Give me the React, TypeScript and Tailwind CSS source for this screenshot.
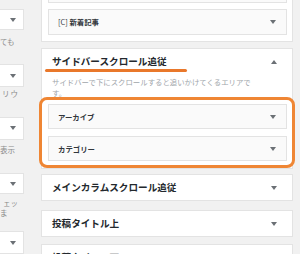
import React from "react";

const Arrow = ({ up }: { up?: boolean }) => (
  <svg width="6" height="4" viewBox="0 0 6 4" className="shrink-0">
    <path d={up ? "M0 4 L3 0 L6 4Z" : "M0 0 L6 0 L3 4Z"} fill="#6b7075" />
  </svg>
);

const LeftBox = ({ cls }: { cls: string }) => (
  <div className={`w-[24px] bg-white border-y border-r border-[#e3e3e3] flex items-center justify-end pr-[7px] ${cls}`}>
    <Arrow />
  </div>
);

const Widget = ({ title, cls }: { title: React.ReactNode; cls: string }) => (
  <div className={`shrink-0 bg-[#fafafa] border border-[#e3e3e3] flex items-center justify-between pl-[9px] pr-[10px] ${cls}`}>
    <span className="text-[7.4px] font-bold text-[#32373c] leading-none">{title}</span>
    <Arrow />
  </div>
);

const Sidebar = ({ title, cls }: { title: string; cls: string }) => (
  <div className={`shrink-0 bg-white border border-[#e3e3e3] flex items-center justify-between pl-[10px] pr-[15px] ${cls}`}>
    <span className="text-[9.6px] font-bold text-[#23282d] leading-none">{title}</span>
    <Arrow />
  </div>
);

export default function App() {
  return (
    <div className="relative w-[300px] h-[254px] overflow-hidden bg-[#f1f1f1] flex font-['Noto_Sans_CJK_JP','Noto_Sans',sans-serif]">
      {/* left column */}
      <div className="w-[25px] shrink-0 flex flex-col text-[7.5px] leading-[10px] text-[#8a8a8a]">
        <LeftBox cls="mt-[9px] h-[24px]" />
        <p className="mt-[7px] whitespace-nowrap">ても</p>
        <LeftBox cls="mt-[17px] h-[26px]" />
        <p className="mt-[2px] pl-[2px] whitespace-nowrap tracking-[1px]">リウ</p>
        <LeftBox cls="mt-[18px] h-[26px]" />
        <p className="mt-[5px] whitespace-nowrap">表示</p>
        <LeftBox cls="mt-[18px] h-[24px]" />
        <p className="mt-[4px] pl-[3px] whitespace-nowrap">ェッ</p>
        <p className="whitespace-nowrap">ま</p>
        <LeftBox cls="mt-[13px] h-[26px]" />
      </div>

      {/* sidebars column */}
      <div className="ml-[16px] w-[252px] shrink-0 flex flex-col">
        <div className="h-[42px] shrink-0 bg-white border-x border-b border-[#e3e3e3] flex flex-col justify-end pl-[6px] pr-[5px] pb-[6px] gap-[6px] overflow-hidden">
          <Widget title="" cls="h-[26px]" />
          <Widget
            title={
              <>
                <span className="font-normal">[C] </span>新着記事
              </>
            }
            cls="h-[26px]"
          />
        </div>

        <div className="mt-[6px] shrink-0 bg-white border border-[#e3e3e3] flex flex-col pl-[6px] pr-[5px] pt-[6px] pb-[7px]">
          <div className="h-[14px] flex items-center justify-between pl-[4px] pr-[10px]">
            <span className="text-[9.6px] font-bold text-[#23282d] leading-none">サイドバースクロール追従</span>
            <Arrow up />
          </div>
          <p className="mt-[7px] pl-[4px] w-[212px] text-[7.4px] leading-[11px] text-[#a0a5aa]">
            サイドバーで下にスクロールすると追いかけてくるエリアです。
          </p>
          <Widget title="アーカイブ" cls="mt-[6px] h-[25px]" />
          <Widget title="カテゴリー" cls="mt-[7px] h-[25px]" />
        </div>

        <Sidebar title="メインカラムスクロール追従" cls="mt-[5px] h-[27px]" />
        <Sidebar title="投稿タイトル上" cls="mt-[9px] h-[27px]" />
        <Sidebar title="投稿タイトル下" cls="mt-[7px] h-[27px]" />
      </div>

      {/* annotations */}
      <div className="absolute left-[45px] top-[69px] w-[142px] h-[3px] rounded-full bg-[#e9782b]" />
      <div className="absolute left-[39px] top-[97px] w-[256px] h-[71px] rounded-[8px] border-[3px] border-[#ef8634]" />
    </div>
  );
}
